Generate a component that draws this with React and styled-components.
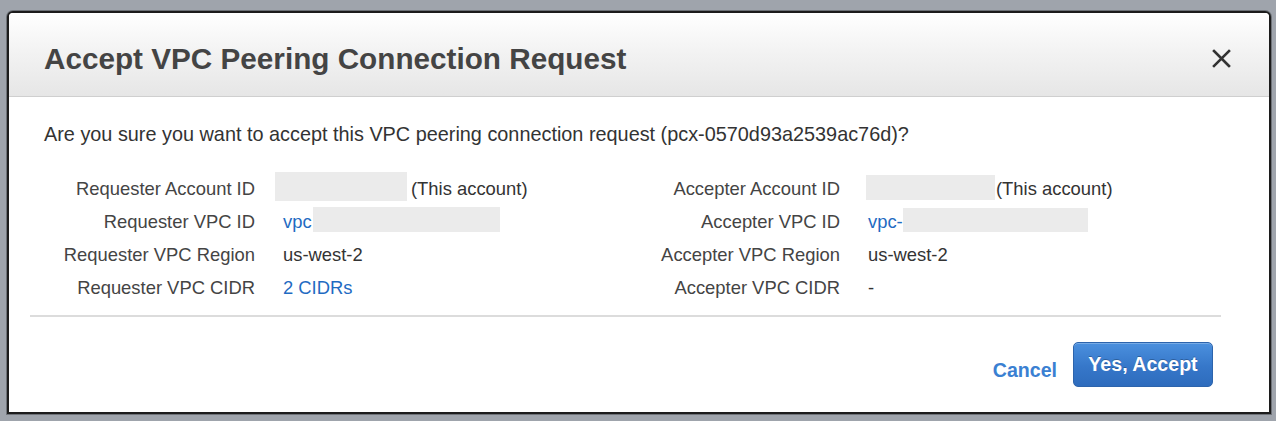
import React from "react";
import styled, { createGlobalStyle } from "styled-components";

const GlobalStyle = createGlobalStyle`
  html, body {
    margin: 0;
    padding: 0;
    background: #9fa4ac;
  }
  body {
    font-family: "Liberation Sans", Arial, Helvetica, sans-serif;
  }
`;

const rows = [
  {
    left: {
      label: "Requester Account ID",
      blank: { w: 132, h: 29, ml: -8, mr: 4, dy: -2 },
      text: "(This account)",
    },
    right: {
      label: "Accepter Account ID",
      blank: { w: 129, h: 25, ml: -2, mr: 1, dy: -1 },
      text: "(This account)",
    },
  },
  {
    left: { label: "Requester VPC ID", link: "vpc", blank: { w: 187, h: 25, ml: 1, mr: 0, dy: -2 } },
    right: { label: "Accepter VPC ID", link: "vpc-", blank: { w: 185, h: 24, ml: 0, mr: 0, dy: -2 } },
  },
  {
    left: { label: "Requester VPC Region", text: "us-west-2" },
    right: { label: "Accepter VPC Region", text: "us-west-2" },
  },
  {
    left: { label: "Requester VPC CIDR", link: "2 CIDRs" },
    right: { label: "Accepter VPC CIDR", text: "-" },
  },
];

const Value = ({ item, pad }) => (
  <ValueCell $pad={pad}>
    {item.link && <Link>{item.link}</Link>}
    {item.blank && (
      <Redacted
        $w={item.blank.w}
        $h={item.blank.h}
        $ml={item.blank.ml}
        $mr={item.blank.mr}
        $dy={item.blank.dy}
      />
    )}
    {item.text && <span>{item.text}</span>}
  </ValueCell>
);

const App = () => {
  return (
    <Page>
      <GlobalStyle />
      <Modal>
        <Header>
          <Title>Accept VPC Peering Connection Request</Title>
          <CloseButton aria-label="Close">
            <svg width="19" height="19" viewBox="0 0 19 19">
              <path
                d="M2 2 L17 17 M17 2 L2 17"
                stroke="#333"
                strokeWidth="2.6"
                strokeLinecap="square"
              />
            </svg>
          </CloseButton>
        </Header>
        <Body>
          <Question>
            Are you sure you want to accept this VPC peering connection request
            (pcx-0570d93a2539ac76d)?
          </Question>
          <Details>
            {rows.map((row) => (
              <React.Fragment key={row.left.label}>
                <Label>{row.left.label}</Label>
                <Value item={row.left} pad={28} />
                <Label>{row.right.label}</Label>
                <Value item={row.right} pad={28} />
              </React.Fragment>
            ))}
          </Details>
        </Body>
        <Divider />
        <Footer>
          <CancelLink>Cancel</CancelLink>
          <PrimaryButton>Yes, Accept</PrimaryButton>
        </Footer>
      </Modal>
    </Page>
  );
};

export default App;

const Page = styled.div`
  height: 421px;
  box-sizing: border-box;
  padding: 11px 5px 7px 7px;
`;

const Modal = styled.div`
  height: 100%;
  box-sizing: border-box;
  background: #ffffff;
  border: 2px solid #1c1c1c;
  border-radius: 6px 6px 0 0;
  box-shadow: 0 0 0 1px #6e7278;
  display: flex;
  flex-direction: column;
  overflow: hidden;
`;

const Header = styled.div`
  height: 84px;
  flex-shrink: 0;
  box-sizing: border-box;
  padding: 8px 38px 0 35px;
  display: flex;
  align-items: center;
  justify-content: space-between;
  background: linear-gradient(to bottom, #ffffff 0%, #f3f3f3 45%, #e6e6e6 100%);
  border-bottom: 1px solid #cfcfcf;
`;

const Title = styled.h1`
  margin: 0;
  font-size: 29.7px;
  font-weight: bold;
  color: #444444;
`;

const CloseButton = styled.button`
  border: none;
  background: none;
  padding: 0;
  width: 19px;
  height: 19px;
  display: flex;
  cursor: pointer;
`;

const Body = styled.div`
  padding: 27px 35px 0 35px;
`;

const Question = styled.p`
  margin: 0;
  font-size: 19.85px;
  line-height: 20px;
  color: #333333;
`;

const Details = styled.div`
  margin-top: 28px;
  display: grid;
  grid-template-columns: 211px 381px 204px 1fr;
  grid-auto-rows: 33px;
  font-size: 18.4px;
  color: #444444;
`;

const Label = styled.div`
  display: flex;
  align-items: center;
  justify-content: flex-end;
  white-space: nowrap;
  color: #444444;
`;

const ValueCell = styled.div`
  display: flex;
  align-items: center;
  white-space: nowrap;
  padding-left: ${(p) => p.$pad}px;
  color: #333333;
`;

const Link = styled.span`
  color: #1f6bc2;
`;

const Redacted = styled.span`
  display: inline-block;
  flex-shrink: 0;
  width: ${(p) => p.$w}px;
  height: ${(p) => p.$h}px;
  background: #ebebeb;
  margin-left: ${(p) => p.$ml}px;
  margin-right: ${(p) => p.$mr}px;
  transform: translateY(${(p) => p.$dy}px);
`;

const Divider = styled.hr`
  margin: 11px 48px 0 21px;
  border: none;
  height: 2px;
  background: #dcdcdc;
`;

const Footer = styled.div`
  display: flex;
  justify-content: flex-end;
  align-items: center;
  gap: 16px;
  padding: 25px 56px 0 0;
`;

const CancelLink = styled.a`
  font-size: 19.6px;
  font-weight: bold;
  color: #3a80d2;
  margin-top: 12px;
  cursor: pointer;
`;

const PrimaryButton = styled.button`
  width: 140px;
  height: 45px;
  border: 1px solid #2d64ac;
  border-radius: 5px;
  background: linear-gradient(to bottom, #4b90de 0%, #3677c9 55%, #2e6cbd 100%);
  color: #ffffff;
  font-family: "Liberation Sans", Arial, sans-serif;
  font-size: 19.6px;
  font-weight: bold;
  text-shadow: 0 -1px 0 rgba(0, 0, 0, 0.25);
  box-shadow: inset 0 1px 0 rgba(255, 255, 255, 0.25);
  padding: 0;
  cursor: pointer;
`;
